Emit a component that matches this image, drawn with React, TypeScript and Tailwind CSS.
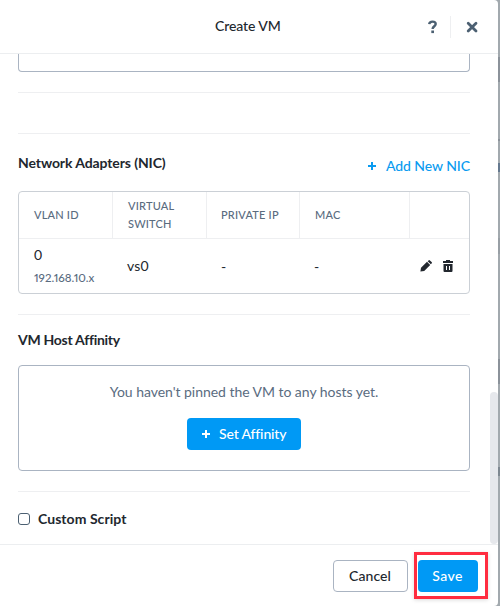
import React from 'react';

const Plus = ({ className = '' }: { className?: string }) => (
  <svg viewBox="0 0 8 8" className={`size-2 shrink-0 ${className}`} fill="currentColor" shapeRendering="crispEdges">
    <path d="M3 0h2v3h3v2H5v3H3V5H0V3h3z" />
  </svg>
);

const Divider = () => <div className="h-px shrink-0 bg-[#eeeff1]" />;

function Header() {
  return (
    <header className="flex h-[54px] shrink-0 items-center border-b border-[#eceef0]">
      <h1 className="ml-[215px] w-[66px] whitespace-nowrap pb-px text-[14px] font-medium leading-5 tracking-[-0.1px]">Create VM</h1>
      <svg viewBox="0 0 10 14" className="ml-[147px] h-[14px] w-[10px] text-[#4c6072]" fill="none" stroke="currentColor" strokeWidth="2.4">
        <path d="M1.2 4.2C1.4 2.5 2.7 1.6 4.5 1.6c2 0 3.2 1 3.2 2.4 0 2.2-3.1 2.3-3.1 5.1" />
        <path d="M3.3 11.8h2.7" strokeWidth="2.6" />
      </svg>
      <div className="ml-[12px] h-[22px] w-px bg-[#eeeff1]" />
      <svg viewBox="0 0 10 10" className="ml-4 mt-px size-[10px] overflow-visible text-[#4c6072]" fill="none" stroke="currentColor" strokeWidth="2.8" strokeLinecap="round">
        <path d="M1.2 1.2l7.8 7.8M9 1.2L1.2 9" />
      </svg>
    </header>
  );
}

const columns = 'grid grid-cols-[94px_94px_93px_110px_59px]';

function NicTable() {
  return (
    <div className="mt-[11px] h-[103px] rounded-[4px] border border-[#cbd0d6]">
      <div className={`${columns} h-[47px] items-stretch border-b border-[#eeeff1] text-[11px] font-medium leading-[18px] tracking-[0.2px] text-[#5a6c7f]`}>
        <div className="flex items-center border-r border-[#eeeff1] pl-[15px]">VLAN ID</div>
        <div className="flex items-center border-r border-[#eeeff1] pl-[15px]">
          <span>VIRTUAL<br />SWITCH</span>
        </div>
        <div className="flex items-center border-r border-[#eeeff1] pl-[14px]">PRIVATE IP</div>
        <div className="flex items-center border-r border-[#eeeff1] pl-[15px]">MAC</div>
        <div />
      </div>
      <div className={`${columns} h-[54px] items-center text-[14px]`}>
        <div className="pb-[2px] pl-[15px]">
          <div className="leading-[26px]">0</div>
          <div className="text-[11.5px] font-medium leading-[20px] text-[#5a6c7f] proportional-nums">192.168.10.x</div>
        </div>
        <div className="pb-[2px] pl-[14px] tracking-[0.2px]">vs0</div>
        <div className="pl-[14px]">-</div>
        <div className="pl-[14px]">-</div>
        <div className="flex items-center gap-[11px] pl-[10px]">
          <svg viewBox="0 0 12 12" className="size-3" fill="currentColor">
            <path d="M1 7.8L7 1.8l3.2 3.2-6 6L.4 11.6zM7.7 1.2l.8-.8a1 1 0 0 1 1.4 0l1.7 1.7a1 1 0 0 1 0 1.4l-.8.8z" />
          </svg>
          <svg viewBox="0 0 10 12" className="h-3 w-[10px]" fill="currentColor">
            <path fillRule="evenodd" d="M3 0h4v1h3v2H0V1h3zM.5 4h9v7a1 1 0 0 1-1 1h-7a1 1 0 0 1-1-1zM3 6V10h1V6zm3 0V10h1V6z" />
          </svg>
        </div>
      </div>
    </div>
  );
}

export default function App() {
  return (
    <div className="flex h-[606px] w-[500px] overflow-hidden bg-[#a2a9ae] font-['Lato',sans-serif] text-[#22272e]">
      <main className="flex w-[498px] shrink-0 flex-col rounded-r-[4px] bg-white">
        <Header />
        <div className="flex h-[490px] shrink-0 justify-between">
          <div className="ml-[18px] flex w-[452px] flex-col">
            <div className="h-[18px] shrink-0 rounded-b-[4px] border border-t-0 border-[#aab4c2]" />
            <div className="h-5 shrink-0" />
            <Divider />
            <div className="h-10 shrink-0" />
            <Divider />
            <div className="mt-[18px] flex h-[28px] shrink-0 justify-between">
              <h2 className="whitespace-nowrap text-[14px] font-bold leading-[22px] tracking-[-0.1px]">Network Adapters (NIC)</h2>
              <button className="flex items-center whitespace-nowrap text-[14px] font-medium tracking-[-0.07px] text-[#0a9bf0]">
                <Plus className="mr-[10px]" />
                <span className="pb-px">Add New NIC</span>
              </button>
            </div>
            <NicTable />
            <div className="h-5 shrink-0" />
            <Divider />
            <h2 className="mt-[14px] h-[36px] shrink-0 text-[14px] font-bold leading-[22px] tracking-[-0.28px]">VM Host Affinity</h2>
            <section className="flex h-[106px] shrink-0 flex-col items-center rounded-[4px] border border-[#aab4c2] pt-[15px]">
              <p className="text-[14px] leading-[22px] tracking-[-0.04px] text-[#5a6c7f]">You haven't pinned the VM to any hosts yet.</p>
              <button className="mt-[15px] flex h-8 w-[114px] items-center rounded-[4px] bg-[#0099f5] pl-[15px] text-[14px] font-medium tracking-[-0.15px] text-white">
                <Plus className="mr-[9px]" />
                <span className="whitespace-nowrap pb-[2px]">Set Affinity</span>
              </button>
            </section>
            <div className="h-5 shrink-0" />
            <Divider />
            <label className="mt-[16px] flex items-center text-[14px] font-bold leading-[22px]">
              <span className="mr-2 size-3 rounded-[3px] border border-[#4c6072]" />
              <span className="tracking-[0.05px]">Custom Script</span>
            </label>
          </div>
          <div className="mt-[338px] h-[152px] w-2 rounded-full bg-[#e6e8ec]" />
        </div>
        <footer className="flex h-[62px] items-start border-t border-[#eceef0]">
          <button className="ml-[333px] mt-[15px] flex h-8 w-[75px] items-center justify-center rounded-[4px] border border-[#aab4c2] pb-[2px] pr-px text-[14px] font-medium tracking-[0.1px]">Cancel</button>
          <div className="ml-[6px] mt-[7px] flex h-[47px] w-[74px] border-[3px] border-[#ff2c40] pl-[1px] pt-[5px] shadow-[0_1px_4px_rgba(0,0,0,0.15)]">
            <button className="flex h-8 w-[60px] items-center justify-center rounded-[4px] bg-[#0099f5] pb-[2px] pr-px text-[14px] font-medium tracking-[0.4px] text-white">Save</button>
          </div>
        </footer>
      </main>
      <aside className="flex w-[2px] flex-col">
        <div className="h-[57px]" />
        <div className="h-[25px] bg-[#8b929a]" />
        <div className="h-[57px]" />
        <div className="h-[2px] bg-[#8b929a]" />
        <div className="h-[22px]" />
        <div className="h-[9px] bg-[#65798f]" />
        <div className="h-[66px]" />
        <div className="h-[16px] bg-[#989fa5]" />
        <div className="h-[105px]" />
        <div className="h-[25px] bg-[#8b929a]" />
        <div className="h-[83px]" />
        <div className="h-[9px] bg-[#7e8891]" />
      </aside>
    </div>
  );
}
